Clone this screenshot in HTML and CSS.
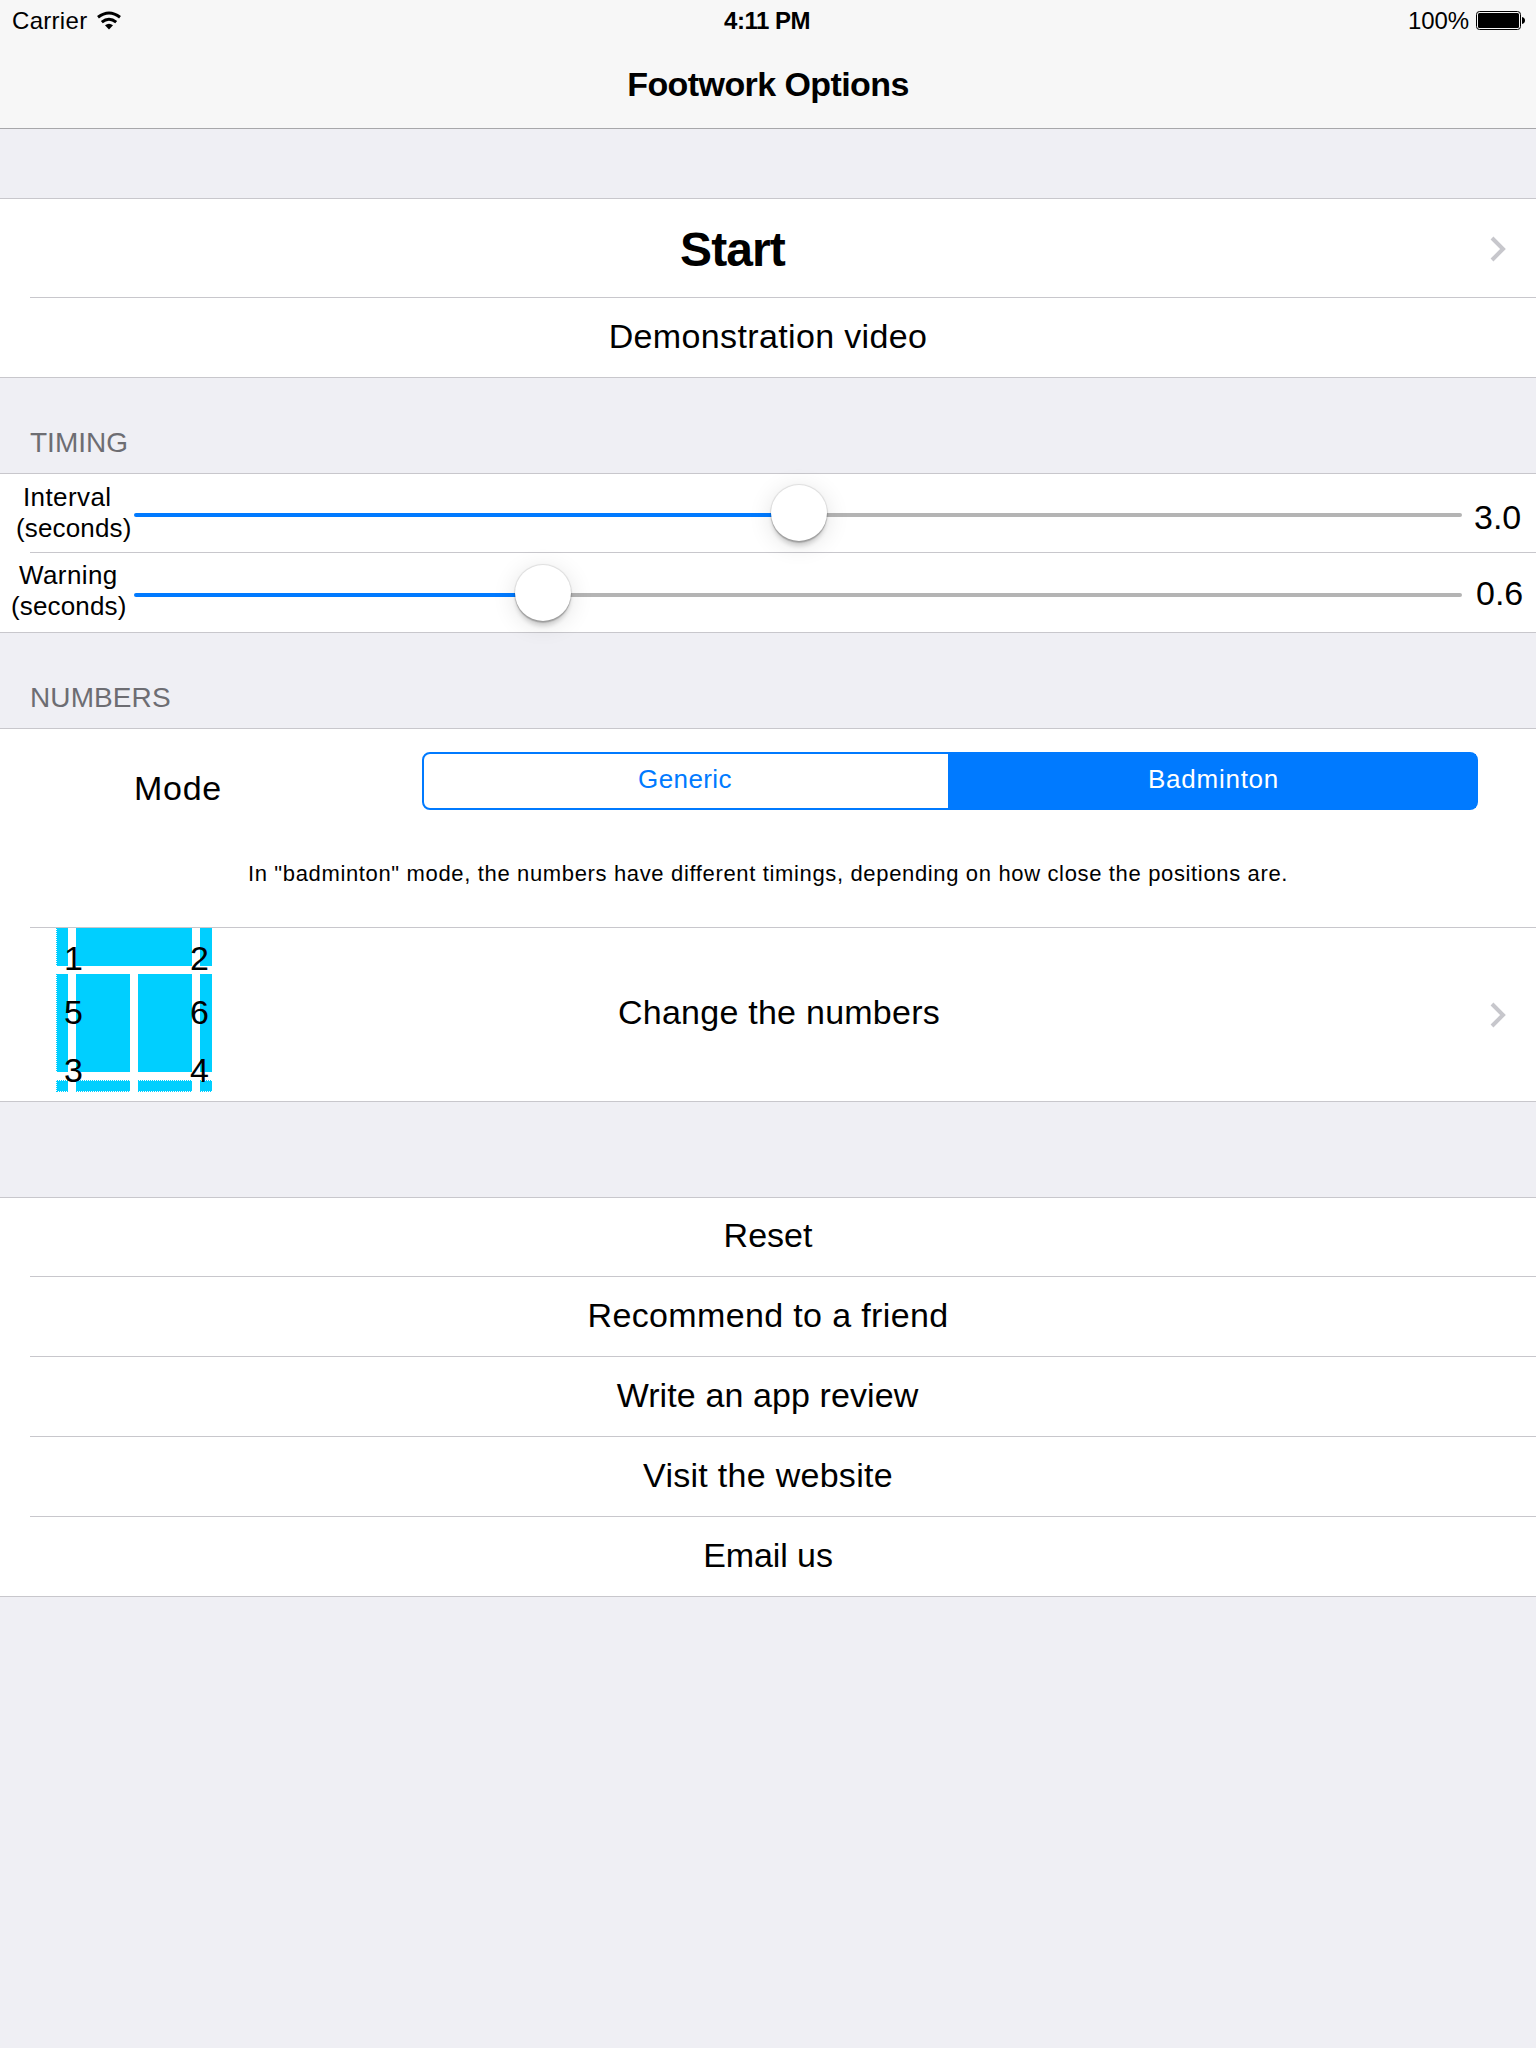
FILE: index.html
```html
<!DOCTYPE html>
<html lang="en">
<head>
<meta charset="utf-8">
<title>Footwork Options</title>
<link rel="stylesheet" href="styles.css">
</head>
<body>
<header class="navbar">
  <div class="status">
    <div class="status-left">
      <span class="carrier">Carrier</span>
      <svg class="wifi" width="26" height="20" viewBox="0 0 26 20" aria-hidden="true">
        <path d="M2 6.2Q13 -2.2 24 6.2" fill="none" stroke="#000" stroke-width="3"/>
        <path d="M5.8 11.2Q13 5.2 20.2 11.2" fill="none" stroke="#000" stroke-width="3"/>
        <path d="M9 14.2Q13 11.2 17 14.2L13 18.6Z" fill="#000"/>
      </svg>
    </div>
    <span class="time">4:11 PM</span>
    <div class="status-right">
      <span class="percent">100%</span>
      <svg class="battery" width="50" height="20" viewBox="0 0 50 20" aria-hidden="true">
        <rect x=".5" y=".5" width="44" height="18" rx="3" fill="none" stroke="#000"/>
        <rect x="2" y="2" width="41" height="15" rx="1.5" fill="#000"/>
        <path d="M46 6Q49 6.6 49 9.5T46 13Z" fill="#000"/>
      </svg>
    </div>
  </div>
  <h1 class="title">Footwork Options</h1>
</header>

<main>
  <ul class="group group-first">
    <li class="cell">
      <div class="row row-start">
        <span class="start">Start</span>
        <svg class="chevron" width="18" height="26" viewBox="0 0 18 26" aria-hidden="true"><path d="M2 2L13 13L2 24" fill="none" stroke="#c7c7cc" stroke-width="4"/></svg>
      </div>
    </li>
    <li class="cell"><div class="row row-demo"><span class="sp-demo">Demonstration video</span></div></li>
  </ul>

  <h2 class="heading heading-timing">TIMING</h2>
  <ul class="group">
    <li class="cell">
      <div class="row row-slider row-interval">
        <div class="label"><span class="word interval">Interval</span><span class="unit">(seconds)</span></div>
        <div class="slider"><div class="fill" style="width:665px"></div><div class="thumb"></div><div class="rest"></div></div>
        <span class="value">3.0</span>
      </div>
    </li>
    <li class="cell">
      <div class="row row-slider row-warning">
        <div class="label"><span class="word warning">Warning</span><span class="unit">(seconds)</span></div>
        <div class="slider"><div class="fill" style="width:409px"></div><div class="thumb"></div><div class="rest"></div></div>
        <span class="value">0.6</span>
      </div>
    </li>
  </ul>

  <h2 class="heading heading-numbers">NUMBERS</h2>
  <ul class="group">
    <li class="cell">
      <div class="mode">
        <div class="mode-line">
          <span class="mode-label">Mode</span>
          <div class="segments">
            <span class="segment generic">Generic</span>
            <span class="segment badminton">Badminton</span>
          </div>
        </div>
        <p class="note">In "badminton" mode, the numbers have different timings, depending on how close the positions are.</p>
      </div>
    </li>
    <li class="cell">
      <div class="row row-change">
        <svg class="court" width="156" height="164" viewBox="0 0 156 164">
          <g fill="#00cfff">
            <path d="M1 0h11v38H1zM20 0h116v38H20zM144 0h12v38h-12z"/>
            <path d="M1 46h11v98H1zM20 46h54v98H20zM82 46h54v98H82zM144 46h12v98h-12z"/>
            <path d="M1 153h11v10H1zM20 153h54v10H20zM82 153h54v10H82zM144 153h12v10h-12z"/>
          </g>
          <g stroke="#00cfff" stroke-dasharray="1 1">
            <path d="M.5 0V38M.5 46V144M.5 153V164"/>
            <path d="M1 152.5H12M20 152.5H74M82 152.5H136M144 152.5H156"/>
            <path d="M1 163.5H12M20 163.5H74M82 163.5H136M144 163.5H156"/>
          </g>
          <g class="court-digits">
            <text x="17.5" y="42">1</text><text x="143.5" y="42">2</text>
            <text x="17.5" y="96">5</text><text x="143.5" y="96">6</text>
            <text x="17.5" y="154">3</text><text x="143.5" y="154">4</text>
          </g>
        </svg>
        <span class="change">Change the numbers</span>
        <svg class="chevron" width="18" height="26" viewBox="0 0 18 26" aria-hidden="true"><path d="M2 2L13 13L2 24" fill="none" stroke="#c7c7cc" stroke-width="4"/></svg>
      </div>
    </li>
  </ul>

  <ul class="group group-links">
    <li class="cell"><div class="row row-link row-reset"><span class="sp-reset">Reset</span></div></li>
    <li class="cell"><div class="row row-link"><span class="sp-recommend">Recommend to a friend</span></div></li>
    <li class="cell"><div class="row row-link"><span class="sp-review">Write an app review</span></div></li>
    <li class="cell"><div class="row row-link"><span class="sp-visit">Visit the website</span></div></li>
    <li class="cell"><div class="row row-link"><span class="sp-email">Email us</span></div></li>
  </ul>
</main>
</body>
</html>
```
FILE: styles.css
```css
* { box-sizing: border-box; }

body {
  margin: 0;
  min-height: 2048px;
  background: #efeff4;
  color: #000;
  font-family: "Liberation Sans", Arial, Helvetica, sans-serif;
  font-size: 34px;
}

h1, h2, p, ul { margin: 0; padding: 0; }
ul { list-style: none; }
span { white-space: nowrap; }

/* Status and navigation bar */
.navbar {
  height: 129px;
  background: #f7f7f7;
  border-bottom: 1px solid #a7a7aa;
}
.status {
  display: grid;
  grid-template-columns: 1fr auto 1fr;
  align-items: center;
  height: 41px;
  padding: 0 11px 0 12px;
  font-size: 24px;
}
.status-left, .status-right { display: flex; align-items: center; }
.status-right { justify-content: flex-end; }
.carrier { letter-spacing: .3px; }
.wifi { margin-left: 9px; }
.time { padding-right: 3px; font-weight: bold; letter-spacing: -.5px; }
.percent { margin-right: 7px; letter-spacing: -.1px; }
.battery { margin-right: -1px; }
.title {
  font-size: 34px;
  line-height: 87px;
  text-align: center;
  letter-spacing: -.58px;
}

/* Grouped table */
.group {
  background: #fff;
  border-top: 1px solid #c8c7cc;
  border-bottom: 1px solid #c8c7cc;
}
.group-first { margin-top: 69px; }
.group-links { margin-top: 95px; }
.cell + .cell::before {
  content: "";
  display: block;
  height: 1px;
  margin-left: 30px;
  background: #c8c7cc;
}
.row { display: flex; align-items: center; justify-content: center; }
.row-start { height: 98px; padding: 1px 28px 0 0; }
.start {
  flex: 1;
  padding: 2px 25px 0 0;
  font-size: 48px;
  font-weight: bold;
  letter-spacing: -.9px;
  text-align: center;
}
.row-demo { height: 79px; padding-bottom: 2px; }
.row-link { height: 79px; padding-bottom: 3px; }
.row-reset { height: 78px; }
.sp-demo { letter-spacing: .36px; }
.sp-reset { letter-spacing: 0; }
.sp-recommend { letter-spacing: .36px; }
.sp-review { letter-spacing: .1px; margin-right: 1px; }
.sp-visit { letter-spacing: .28px; }
.sp-email { letter-spacing: -.1px; }

.heading {
  height: 95px;
  padding-left: 30px;
  font-size: 28px;
  font-weight: normal;
  line-height: 32px;
  color: #6d6d72;
}
.heading-timing { padding-top: 49px; }
.heading-numbers { padding-top: 49px; letter-spacing: .1px; }

/* Sliders */
.row-slider { justify-content: flex-start; }
.row-interval { height: 78px; }
.row-warning { height: 79px; }
.label {
  display: flex;
  flex-direction: column;
  align-items: flex-start;
  align-self: flex-start;
  width: 134px;
  font-size: 26px;
  line-height: 31px;
}
.row-interval .label { padding: 8px 0 0 16px; }
.row-warning .label { padding: 7px 0 0 11px; }
.interval { margin-left: 7px; letter-spacing: .4px; }
.warning { margin-left: 8px; letter-spacing: .4px; }
.unit { letter-spacing: .15px; }
.slider { display: flex; align-items: center; width: 1328px; height: 56px; }
.fill, .rest { height: 4px; margin-top: 4px; }
.fill { background: #007aff; border-radius: 2px 0 0 2px; }
.rest { flex: 1; background: #b4b4b4; border-radius: 0 2px 2px 0; }
.thumb {
  flex: none;
  width: 56px;
  height: 56px;
  margin: 0 -28px;
  border-radius: 50%;
  background: #fff;
  box-shadow: 0 0 1px 1px rgba(0, 0, 0, .1), 0 2px 1px rgba(0, 0, 0, .17), 0 6px 4px -1px rgba(0, 0, 0, .14), 0 4px 24px rgba(0, 0, 0, .12);
  z-index: 1;
}
.row-interval .value { margin-left: 12px; padding-top: 8px; }
.row-warning .value { margin-left: 14px; padding-top: 1px; }

/* Mode selection */
.mode { height: 198px; padding-top: 23px; }
.mode-line { display: flex; align-items: flex-start; height: 106px; }
.mode-label { width: 422px; padding: 16px 0 0 134px; line-height: 40px; letter-spacing: .7px; }
.segments {
  display: flex;
  width: 1056px;
  height: 58px;
  border: 2px solid #007aff;
  border-radius: 8px;
  font-size: 26px;
  line-height: 50px;
  text-align: center;
}
.generic { width: 524px; padding-right: 2px; color: #007aff; letter-spacing: .4px; }
.badminton { flex: 1; padding-left: 3px; color: #fff; background: #007aff; letter-spacing: .75px; }
.note { padding-top: 1px; font-size: 22px; line-height: 30px; text-align: center; letter-spacing: .65px; white-space: nowrap; }

/* Court row */
.row-change { height: 173px; padding: 0 28px 0 56px; }
.court { align-self: flex-start; }
.court-digits { font-size: 34px; text-anchor: middle; fill: #000; }
.change { flex: 1; padding: 0 0 5px; margin-left: -144px; text-align: center; letter-spacing: .25px; }
.chevron { flex: none; }
```
